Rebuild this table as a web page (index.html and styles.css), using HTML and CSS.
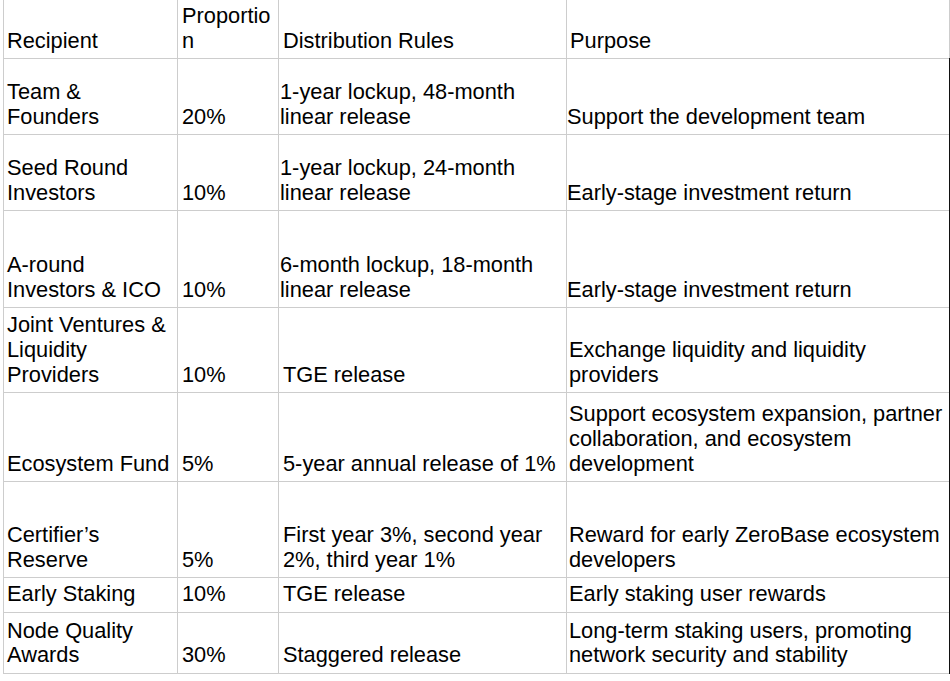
FILE: index.html
```html
<!DOCTYPE html>
<html lang="en">
<head>
<meta charset="utf-8">
<title>Token Allocation</title>
<link rel="stylesheet" href="styles.css">
</head>
<body>
<table class="alloc">
  <colgroup>
    <col class="c-recipient">
    <col class="c-share">
    <col class="c-rules">
    <col class="c-purpose">
  </colgroup>
  <thead>
    <tr class="row-head">
      <th class="cell cell-recipient">Recipient</th>
      <th class="cell cell-share cell-break">Proportion</th>
      <th class="cell cell-rules-head">Distribution Rules</th>
      <th class="cell cell-purpose-head">Purpose</th>
    </tr>
  </thead>
  <tbody>
    <tr class="row-team tight">
      <td class="cell cell-recipient">Team &amp; Founders</td>
      <td class="cell cell-share">20%</td>
      <td class="cell cell-rules">1-year lockup, 48-month linear release</td>
      <td class="cell cell-purpose">Support the development team</td>
    </tr>
    <tr class="row-seed tight">
      <td class="cell cell-recipient">Seed Round Investors</td>
      <td class="cell cell-share">10%</td>
      <td class="cell cell-rules">1-year lockup, 24-month linear release</td>
      <td class="cell cell-purpose">Early-stage investment return</td>
    </tr>
    <tr class="row-around tight">
      <td class="cell cell-recipient">A-round Investors &amp; ICO</td>
      <td class="cell cell-share">10%</td>
      <td class="cell cell-rules">6-month lockup, 18-month linear release</td>
      <td class="cell cell-purpose">Early-stage investment return</td>
    </tr>
    <tr class="row-joint">
      <td class="cell cell-recipient">Joint Ventures &amp; Liquidity Providers</td>
      <td class="cell cell-share">10%</td>
      <td class="cell cell-rules">TGE release</td>
      <td class="cell cell-purpose">Exchange liquidity and liquidity providers</td>
    </tr>
    <tr class="row-eco">
      <td class="cell cell-recipient">Ecosystem Fund</td>
      <td class="cell cell-share">5%</td>
      <td class="cell cell-rules">5-year annual release of 1%</td>
      <td class="cell cell-purpose">Support ecosystem expansion, partner collaboration, and ecosystem development</td>
    </tr>
    <tr class="row-cert">
      <td class="cell cell-recipient">Certifier’s Reserve</td>
      <td class="cell cell-share">5%</td>
      <td class="cell cell-rules">First year 3%, second year 2%, third year 1%</td>
      <td class="cell cell-purpose">Reward for early ZeroBase ecosystem developers</td>
    </tr>
    <tr class="row-staking">
      <td class="cell cell-recipient">Early Staking</td>
      <td class="cell cell-share">10%</td>
      <td class="cell cell-rules">TGE release</td>
      <td class="cell cell-purpose">Early staking user rewards</td>
    </tr>
    <tr class="row-node">
      <td class="cell cell-recipient">Node Quality Awards</td>
      <td class="cell cell-share">30%</td>
      <td class="cell cell-rules">Staggered release</td>
      <td class="cell cell-purpose">Long-term staking users, promoting network security and stability</td>
    </tr>
  </tbody>
</table>
</body>
</html>
```

FILE: styles.css
```css
html, body {
  margin: 0;
  padding: 0;
  background: #ffffff;
}

body {
  font-family: "Liberation Sans", Arial, sans-serif;
  font-size: 21.8px;
  line-height: 24.6px;
  color: #000000;
}

.alloc {
  border-collapse: collapse;
  table-layout: fixed;
  width: 946px;
  margin-left: 3px;
}

.c-recipient { width: 174px; }
.c-share { width: 101px; }
.c-rules { width: 288px; }
.c-purpose { width: 383px; }

.cell {
  border: 1px solid #cdcdcd;
  vertical-align: bottom;
  text-align: left;
  font-weight: normal;
  padding: 4px 2px 5px 3px;
}

thead .cell {
  border-top: none;
}

.cell-share { padding-left: 4px; }
.cell-break { word-break: break-all; }
.cell-rules { padding-left: 4px; padding-right: 1px; }
.cell-rules-head { padding-left: 4px; }
.cell-purpose { padding-left: 2px; padding-right: 1px; }
.cell-purpose-head { padding-left: 3px; padding-right: 1px; }

.tight .cell-rules { padding-left: 1px; }
.tight .cell-purpose { padding-left: 0; }

tbody .cell-purpose {
  border-right: 2px solid #111111;
}

.row-head { height: 57px; }
.row-team { height: 76px; }
.row-seed { height: 76px; }
.row-around { height: 97px; }
.row-joint { height: 85px; }
.row-eco { height: 89px; }
.row-cert { height: 96px; }
.row-staking { height: 34px; }
.row-node { height: 61px; }
```
